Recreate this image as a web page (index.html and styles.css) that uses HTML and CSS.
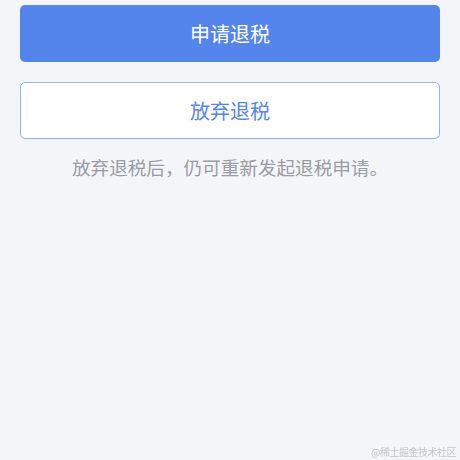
FILE: index.html
```html
<!DOCTYPE html>
<html lang="zh-CN">
<head>
<meta charset="utf-8">
<link rel="stylesheet" href="styles.css">
</head>
<body>
<main class="page">
  <button class="btn btn-primary">申请退税</button>
  <button class="btn btn-outline">放弃退税</button>
  <p class="note">放弃退税后，仍可重新发起退税申请。</p>
</main>
<div class="watermark">@稀土掘金技术社区</div>
</body>
</html>
```
FILE: styles.css
```css
html, body {
  margin: 0;
  padding: 0;
  height: 100%;
  background: #f4f5f9;
  font-family: "Noto Sans CJK SC", "Noto Sans", sans-serif;
}
.page {
  display: flex;
  flex-direction: column;
  padding: 5px 20px 0;
}
.btn {
  display: flex;
  align-items: center;
  justify-content: center;
  height: 57px;
  width: 100%;
  box-sizing: border-box;
  border-radius: 5px;
  font-family: inherit;
  font-size: 20px;
  padding: 0;
  margin: 0;
}
.btn-primary {
  background: #5385ed;
  color: #ffffff;
  border: none;
}
.btn-outline {
  margin-top: 20px;
  background: #ffffff;
  color: #5385ed;
  border: 1px solid #93b2f3;
}
.note {
  margin: 15px 0 0;
  text-align: center;
  font-size: 18.6px;
  line-height: 26px;
  color: #9a9ca3;
}
.watermark {
  position: fixed;
  right: 4px;
  bottom: 1px;
  font-size: 10px;
  letter-spacing: -0.5px;
  color: #c3c5cb;
  font-family: "Noto Sans CJK SC", serif;
}
```
